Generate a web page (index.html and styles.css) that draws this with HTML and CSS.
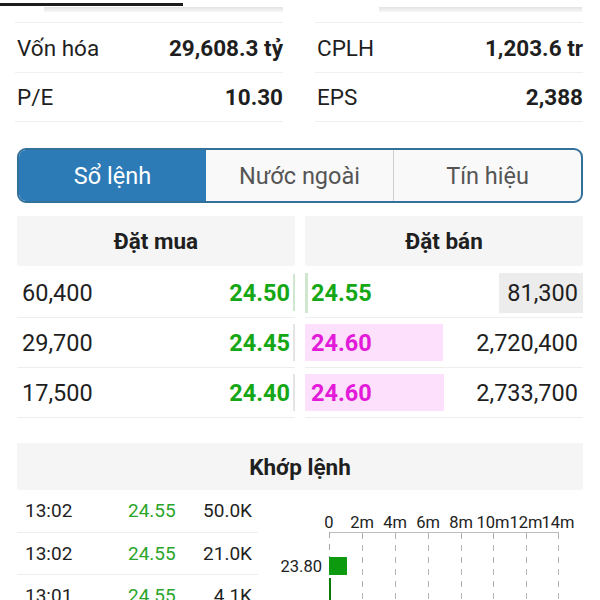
FILE: index.html
```html
<!DOCTYPE html>
<html lang="vi">
<head>
<meta charset="utf-8">
<title>Sổ lệnh</title>
<link rel="stylesheet" href="styles.css">
</head>
<body>
<div class="top-strip">
  <div class="progress"></div>
  <div class="ghost-row">
    <div class="ghost ghost-left"></div>
    <div class="ghost ghost-right"></div>
  </div>
</div>

<div class="stats">
  <div class="stat"><span class="label">Vốn hóa</span><span class="value">29,608.3 tỷ</span></div>
  <div class="stat"><span class="label">CPLH</span><span class="value">1,203.6 tr</span></div>
  <div class="stat"><span class="label">P/E</span><span class="value">10.30</span></div>
  <div class="stat"><span class="label">EPS</span><span class="value">2,388</span></div>
</div>

<div class="tabs">
  <div class="tab active">Sổ lệnh</div>
  <div class="tab">Nước ngoài</div>
  <div class="tab">Tín hiệu</div>
</div>

<div class="book">
  <div class="side buy">
    <div class="side-head">Đặt mua</div>
    <div class="row first">
      <span class="qty">60,400</span><span class="price up">24.50</span>
      <span class="bid-bar light-green"></span>
    </div>
    <div class="row">
      <span class="qty">29,700</span><span class="price up">24.45</span>
      <span class="bid-bar"></span>
    </div>
    <div class="row">
      <span class="qty">17,500</span><span class="price up">24.40</span>
      <span class="bid-bar"></span>
    </div>
  </div>
  <div class="side sell">
    <div class="side-head">Đặt bán</div>
    <div class="row first">
      <span class="ask-bar light-green" style="width:3px"></span>
      <span class="price up">24.55</span><span class="qty hl">81,300</span>
    </div>
    <div class="row">
      <span class="ask-bar pink" style="width:138px"></span>
      <span class="price ceil">24.60</span><span class="qty">2,720,400</span>
    </div>
    <div class="row">
      <span class="ask-bar pink" style="width:139px"></span>
      <span class="price ceil">24.60</span><span class="qty">2,733,700</span>
    </div>
  </div>
</div>

<div class="match-head">Khớp lệnh</div>
<div class="match">
  <div class="match-list">
    <div class="mrow"><span class="t">13:02</span><span class="p">24.55</span><span class="v">50.0K</span></div>
    <div class="mrow"><span class="t">13:02</span><span class="p">24.55</span><span class="v">21.0K</span></div>
    <div class="mrow"><span class="t">13:01</span><span class="p">24.55</span><span class="v">4.1K</span></div>
  </div>
  <svg class="chart" width="342" height="110" viewBox="0 0 342 110">
    <g class="ticks" font-size="16.5" text-anchor="middle" fill="#222">
      <text x="71" y="38">0</text>
      <text x="104" y="38">2m</text>
      <text x="137" y="38">4m</text>
      <text x="170" y="38">6m</text>
      <text x="203" y="38">8m</text>
      <text x="235" y="38">10m</text>
      <text x="268" y="38">12m</text>
      <text x="300" y="38">14m</text>
    </g>
    <g stroke="#b3b3b3" stroke-width="1" stroke-dasharray="6 6">
      <line x1="104.5" y1="43" x2="104.5" y2="110"/>
      <line x1="137.5" y1="43" x2="137.5" y2="110"/>
      <line x1="170.5" y1="43" x2="170.5" y2="110"/>
      <line x1="203.5" y1="43" x2="203.5" y2="110"/>
      <line x1="235.5" y1="43" x2="235.5" y2="110"/>
      <line x1="268.5" y1="43" x2="268.5" y2="110"/>
      <line x1="300.5" y1="43" x2="300.5" y2="110"/>
    </g>
    <line x1="71" y1="42.5" x2="301" y2="42.5" stroke="#bdbdbd" stroke-width="1"/>
    <line x1="71.5" y1="42" x2="71.5" y2="110" stroke="#a8a8a8" stroke-width="1" stroke-dasharray="6 6"/>
    <text x="64" y="82" font-size="16.5" text-anchor="end" fill="#222">23.80</text>
    <rect x="71" y="67" width="18" height="18" fill="#0e9a0e"/>
    <rect x="71" y="88" width="2" height="22" fill="#0b7a0b"/>
  </svg>
</div>
</body>
</html>
```

FILE: styles.css
```css
* { box-sizing: border-box; }

body {
  margin: 0;
  background: #fff;
  font-family: Roboto, "Noto Sans", "Liberation Sans", sans-serif;
  color: #1f1f1f;
  width: 600px;
  overflow: hidden;
}

.top-strip {
  height: 22px;
  padding-top: 3px;
}
.progress {
  width: 183px;
  height: 3px;
  background: #1c1c1c;
}
.ghost-row {
  display: flex;
  margin-top: 1px;
}
.ghost {
  height: 5px;
  background: linear-gradient(#e2e2e2, #f7f7f7);
}
.ghost-left { margin-left: 44px; width: 239px; }
.ghost-right { margin-left: 96px; width: 203px; }

.stats {
  display: grid;
  grid-template-columns: 268px 268px;
  column-gap: 32px;
  padding: 0 17px 0 15px;
}
.stat {
  display: flex;
  justify-content: space-between;
  align-items: center;
  height: 50px;
  padding-left: 2px;
  border-top: 1px solid #efefef;
  font-size: 22.5px;
}
.stat:nth-child(n+3) {
  border-bottom: 1px solid #efefef;
}
.stat .value { font-weight: 700; }

.tabs {
  display: flex;
  margin: 26px 17px 0 17px;
  height: 55px;
  border: 2px solid #33719a;
  border-radius: 9px;
  overflow: hidden;
  background: #f9f9f9;
}
.tab {
  flex: 1;
  display: flex;
  align-items: center;
  justify-content: center;
  font-size: 23.5px;
  color: #555;
}
.tab + .tab { border-left: 1px solid #cfcfcf; }
.tab.active {
  background: #2c7bb6;
  color: #fff;
  border-left: none;
}
.tab.active + .tab { border-left: none; }

.book {
  display: flex;
  gap: 10px;
  margin: 13px 17px 0 17px;
}
.side { flex: 1; }
.side-head {
  height: 50px;
  display: flex;
  align-items: center;
  justify-content: center;
  background: #f5f5f5;
  font-size: 22.5px;
  font-weight: 700;
}
.row {
  position: relative;
  display: flex;
  align-items: center;
  justify-content: space-between;
  height: 50px;
  border-bottom: 1px solid #eeeeee;
  font-size: 23.5px;
}
.row.first { margin-top: 2px; }
.price { font-weight: 700; position: relative; }
.up { color: #16a716; }
.ceil { color: #e31ad9; }

.buy .row { padding: 0 5px 0 5px; }
.buy .qty { position: relative; }
.bid-bar {
  position: absolute;
  right: 0;
  top: 6px;
  bottom: 6px;
  width: 2px;
  background: #e4e4e4;
}
.bid-bar.light-green { background: #cfe6cf; }

.sell .row { padding: 0 5px 0 6px; }
.ask-bar {
  position: absolute;
  left: 0;
  top: 6px;
  bottom: 6px;
}
.row.first .ask-bar { top: 5px; bottom: 4px; }
.ask-bar.pink { background: #fde0fb; }
.ask-bar.light-green { background: #cfe6cf; }
.sell .qty { position: relative; }
.qty.hl {
  background: #ececec;
  align-self: stretch;
  margin: 5px -5px 4px 0;
  padding: 0 5px 0 8px;
  display: flex;
  align-items: center;
}

.match-head {
  margin: 25px 17px 0 17px;
  height: 47px;
  display: flex;
  align-items: center;
  justify-content: center;
  background: #f5f5f5;
  font-size: 22.5px;
  font-weight: 700;
}
.match {
  display: flex;
  margin-left: 17px;
}
.match-list { width: 241px; }
.mrow {
  display: flex;
  align-items: center;
  height: 42.5px;
  border-bottom: 1px solid #eeeeee;
  font-size: 19px;
  padding: 0 6px 0 8px;
}
.mrow .t { width: 103px; }
.mrow .p { color: #2aa52a; }
.mrow .v { margin-left: auto; }
.chart { display: block; font-family: Roboto, "Noto Sans", sans-serif; }
```
